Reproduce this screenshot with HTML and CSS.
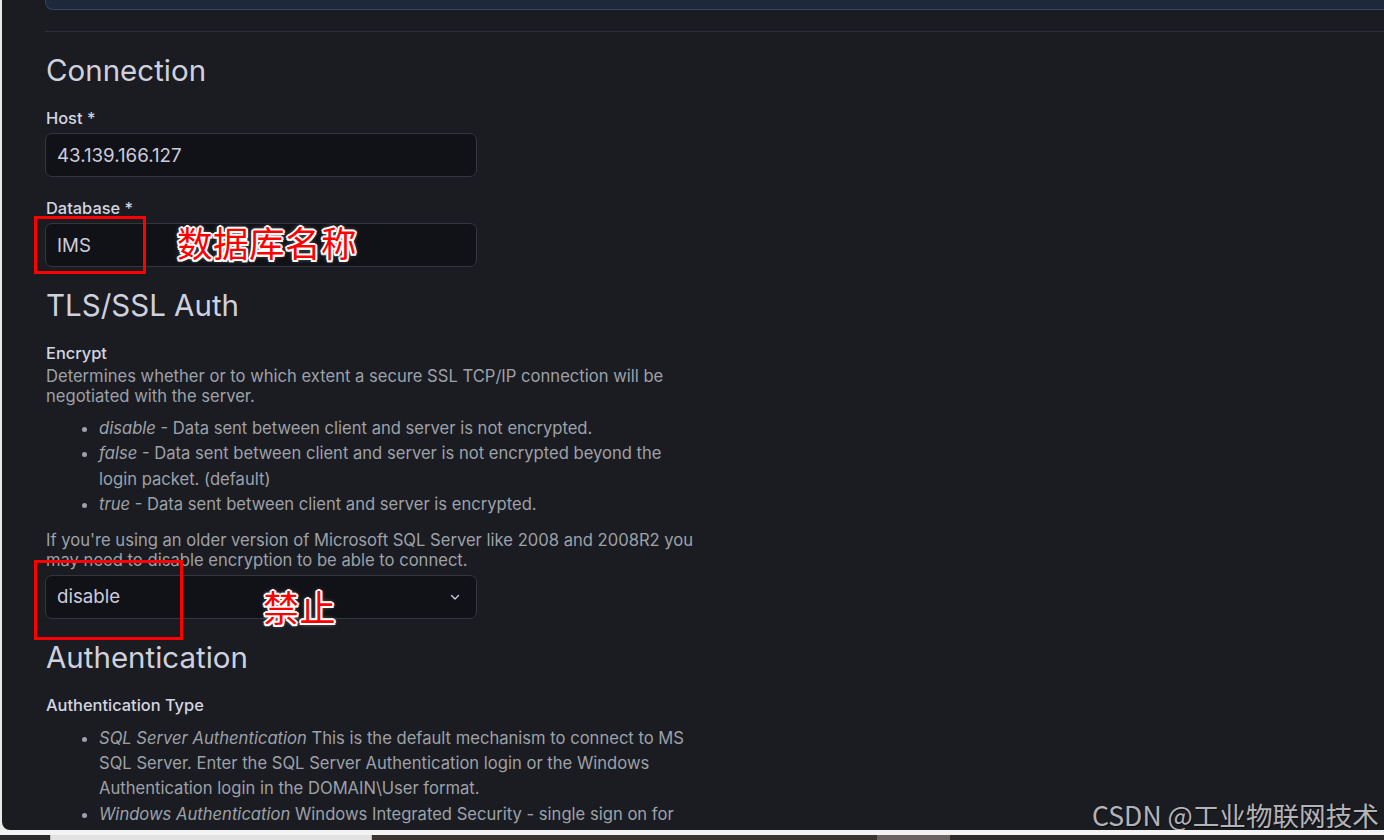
FILE: index.html
```html
<!DOCTYPE html>
<html lang="en">
<head>
<meta charset="utf-8">
<title>MSSQL data source</title>
<link rel="stylesheet" href="styles.css">
</head>
<body>
<div class="screen">
  <main class="panel">
    <div class="top-box"></div>
    <hr class="divider">

    <h2 class="section-title">Connection</h2>
    <div class="field">
      <label class="field-label">Host *</label>
      <div class="input">43.139.166.127</div>
    </div>
    <div class="field">
      <label class="field-label">Database *</label>
      <div class="input">IMS</div>
    </div>

    <h2 class="section-title">TLS/SSL Auth</h2>
    <div class="field-label">Encrypt</div>
    <p class="desc">Determines whether or to which extent a secure SSL TCP/IP connection will be negotiated with the server.</p>
    <ul class="desc-list">
      <li><em>disable</em> - Data sent between client and server is not encrypted.</li>
      <li><em>false</em> - Data sent between client and server is not encrypted beyond the login packet. (default)</li>
      <li><em>true</em> - Data sent between client and server is encrypted.</li>
    </ul>
    <p class="desc desc-after">If you're using an older version of Microsoft SQL Server like 2008 and 2008R2 you may need to disable encryption to be able to connect.</p>
    <div class="input select">
      <span>disable</span>
      <svg class="chevron" width="12" height="12" viewBox="0 0 12 12"><path d="M2.5 4.5 L6 8 L9.5 4.5" fill="none" stroke="#ccccdc" stroke-width="1.4" stroke-linecap="round" stroke-linejoin="round"/></svg>
    </div>

    <h2 class="section-title">Authentication</h2>
    <div class="field-label">Authentication Type</div>
    <ul class="desc-list">
      <li><em>SQL Server Authentication</em> This is the default mechanism to connect to MS SQL Server. Enter the SQL Server Authentication login or the Windows Authentication login in the DOMAIN\User format.</li>
      <li><em>Windows Authentication</em> Windows Integrated Security - single sign on for users who are already logged onto Windows and have enabled this option for MS SQL Server.</li>
    </ul>

    <div class="mark mark-db"></div>
    <div class="note note-db">数据库名称</div>
    <div class="mark mark-enc"></div>
    <div class="note note-enc">禁止</div>
    <div class="watermark">CSDN @工业物联网技术</div>
  </main>
  <footer class="taskbar">
    <div class="seg seg-a"></div>
    <div class="seg seg-b"></div>
    <div class="seg seg-c"></div>
    <div class="seg seg-d"></div>
    <div class="seg seg-e"></div>
  </footer>
</div>
</body>
</html>
```

FILE: styles.css
```css
* { box-sizing: border-box; }

html, body {
  margin: 0;
  padding: 0;
  width: 1384px;
  height: 840px;
  overflow: hidden;
  background: #e9e9ea;
  font-family: Inter, "Noto Sans", "Liberation Sans", sans-serif;
}

.screen {
  display: flex;
  flex-direction: column;
  height: 840px;
}

.panel {
  position: relative;
  margin-left: 2px;
  height: 830px;
  background: #1a1c21;
  border-bottom-left-radius: 8px;
  overflow: hidden;
  padding-left: 43px;
  color: #ccccdc;
}

.top-box {
  height: 10px;
  margin-right: -20px;
  background: #1e283b;
  border: 1px solid #34466a;
  border-top: none;
  border-bottom-left-radius: 8px;
}

.divider {
  margin: 21px 0 0 0;
  border: none;
  border-top: 1px solid #2c2f35;
  height: 0;
}

.section-title {
  margin: 20px 0 0 1px;
  font-size: 29.5px;
  line-height: 36px;
  font-weight: 400;
  color: #d0d1de;
}

.field-label {
  display: block;
  margin: 19px 0 0 1px;
  font-size: 16.4px;
  line-height: 22px;
  font-weight: 500;
  color: #d4d5e0;
}

.field + .field .field-label { margin-top: 20px; }

.input {
  margin-top: 4px;
  width: 432px;
  height: 44px;
  background: #111217;
  border: 1px solid #34363e;
  border-radius: 7px;
  padding: 0 11px;
  display: flex;
  align-items: center;
  font-size: 18.7px;
  color: #ccccdc;
}

.desc {
  margin: 2px 0 0 1px;
  width: 652px;
  font-size: 16.6px;
  line-height: 20px;
  color: #9ea1a9;
}

.desc-after { margin-top: 12px; }

.desc-list {
  margin: 10px 0 0 0;
  padding-left: 54px;
  width: 655px;
  font-size: 16.6px;
  line-height: 25.4px;
  color: #9ea1a9;
}

.desc-list li::marker { font-size: 17px; }

.select {
  margin-top: 5px;
  justify-content: space-between;
  padding-right: 15px;
}

.chevron { display: block; }

/* annotations drawn over the screenshot */
.mark {
  position: absolute;
  border: 3px solid #ff0000;
}
.mark-db { left: 32px; top: 216px; width: 112px; height: 58px; }
.mark-enc { left: 32px; top: 560px; width: 149px; height: 80px; }

.note {
  position: absolute;
  font-family: "Noto Sans CJK SC", sans-serif;
  font-weight: 400;
  color: #ff0000;
  text-shadow:
    2px 0 0 #fff, -2px 0 0 #fff, 0 2px 0 #fff, 0 -2px 0 #fff,
    1.5px 1.5px 0 #fff, -1.5px 1.5px 0 #fff, 1.5px -1.5px 0 #fff, -1.5px -1.5px 0 #fff,
    0 0 5px rgba(255,255,255,0.8);
}
.note-db { left: 175px; top: 219px; font-size: 35.5px; line-height: 46px; letter-spacing: 0.5px; }
.note-enc { left: 261px; top: 583px; font-size: 36px; line-height: 46px; letter-spacing: 0.5px; }

.watermark {
  position: absolute;
  left: 1090px;
  top: 799px;
  font-family: "Noto Sans CJK SC", "Liberation Sans", sans-serif;
  font-size: 26.6px;
  line-height: 32px;
  color: #b4b4b8;
  white-space: nowrap;
  text-shadow: 1px 1px 1px rgba(0,0,0,0.6);
}

.taskbar {
  height: 10px;
  padding-top: 5px;
  display: flex;
  background: #f3f3f3;
}
.seg { height: 5px; }
.seg-a { width: 50px; background: #2a2a2c; }
.seg-b { width: 322px; background: #e2e2e2; border-left: 1px solid #bdbdbd; border-right: 1px solid #bdbdbd; }
.seg-c { width: 505px; background: #3a3330; }
.seg-d { width: 73px; background: #6b6462; }
.seg-e { flex: 1; background: #2c2a2b; }
```
